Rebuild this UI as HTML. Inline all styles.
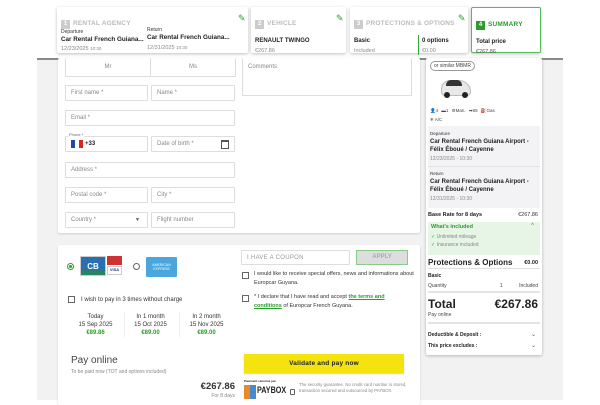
<!DOCTYPE html>
<html><head><meta charset="utf-8"><style>
*{box-sizing:border-box;margin:0;padding:0}
body{width:600px;height:400px;overflow:hidden;background:#fff;font-family:"Liberation Sans",sans-serif;position:relative;color:#222}
.a{position:absolute}
.gray{left:37px;top:58px;width:526px;height:342px;background:#f2f2f2;border-top:2px solid #8a8a8a}
.card{position:absolute;background:#fff;box-shadow:0 1px 3px rgba(0,0,0,.25);border-radius:2px}
.num{display:inline-block;width:9px;height:9px;background:#ccc;color:#fff;font-size:6px;text-align:center;line-height:9px;font-weight:bold;margin-right:3px}
.st{font-size:6.5px;color:#bbb;font-weight:bold;letter-spacing:.2px}
.pen{position:absolute;top:6px;color:#2a9d2a;font-size:9px}
.s{font-size:5px;color:#333}
.b{font-size:6.5px;font-weight:bold;color:#222}
.g{font-size:5.5px;color:#888}
.in{position:absolute;border:1px solid #ddd;background:#fff;font-size:6px;color:#888;padding-left:5px;display:flex;align-items:center;border-radius:1px}
.cb{position:absolute;width:7px;height:7px;border:1px solid #666;background:#fff}
.t6{font-size:6px;color:#333}
</style></head><body>
<div class="a gray"></div>
<!-- top cards -->
<div class="card" style="left:57px;top:7px;width:191px;height:46px">
 <div class="a" style="left:4px;top:5px"><span class="num">1</span><span class="st">RENTAL AGENCY</span></div>
 <div class="pen" style="left:181px">✎</div>
 <div class="a s" style="left:4px;top:22px">Departure</div>
 <div class="a b" style="left:4px;top:29px;font-size:6.3px">Car Rental French Guiana...</div>
 <div class="a g" style="left:4px;top:39px">12/23/2025 <span style="font-size:4.5px">10:30</span></div>
 <div class="a s" style="left:90px;top:20px">Return</div>
 <div class="a b" style="left:90px;top:27px;font-size:6.3px">Car Rental French Guiana...</div>
 <div class="a g" style="left:90px;top:38px">12/31/2025 <span style="font-size:4.5px">10:30</span></div>
</div>
<div class="card" style="left:251px;top:7px;width:95px;height:46px">
 <div class="a" style="left:4px;top:5px"><span class="num">2</span><span class="st">VEHICLE</span></div>
 <div class="pen" style="left:85px">✎</div>
 <div class="a b" style="left:4px;top:31px;font-size:6px">RENAULT TWINGO</div>
 <div class="a g" style="left:4px;top:41px">€267.86</div>
</div>
<div class="card" style="left:350px;top:7px;width:118px;height:46px">
 <div class="a" style="left:4px;top:5px"><span class="num">3</span><span class="st">PROTECTIONS &amp; OPTIONS</span></div>
 <div class="pen" style="left:108px">✎</div>
 <div class="a b" style="left:4px;top:31px;font-size:6px">Basic</div>
 <div class="a g" style="left:4px;top:41px">Included</div>
 <div class="a" style="left:68px;top:28px;width:1px;height:20px;background:#3a3"></div>
 <div class="a b" style="left:72px;top:31px;font-size:6px">0 options</div>
 <div class="a g" style="left:72px;top:41px">€0.00</div>
</div>
<div class="card" style="left:471px;top:7px;width:70px;height:46px;border:1px solid #5cb85c">
 <div class="a" style="left:4px;top:5px"><span class="num" style="background:#2a9d2a">4</span><span class="st" style="color:#2a9d2a">SUMMARY</span></div>
 <div class="a b" style="left:4px;top:31px;font-size:6px">Total price</div>
 <div class="a g" style="left:4px;top:41px;color:#555">€267.86</div>
</div>
<!-- form panel -->
<div class="card" style="left:58px;top:58px;width:362px;height:175px;box-shadow:0 1px 2px rgba(0,0,0,.15)">
 <div class="in" style="left:7px;top:0;width:171px;height:19px;padding:0;border-top:none">
  <div style="width:85px;text-align:center;border-right:1px solid #ddd;height:100%;line-height:19px">Mr</div><div style="flex:1;text-align:center">Ms</div></div>
 <div class="in" style="left:7px;top:27px;width:83px;height:16px">First name *</div>
 <div class="in" style="left:93px;top:27px;width:84px;height:16px">Name *</div>
 <div class="in" style="left:7px;top:52px;width:170px;height:16px">Email *</div>
 <div class="in" style="left:7px;top:78px;width:83px;height:16px;color:#222;font-weight:bold"><span style="display:inline-block;width:4px;height:8px;background:#1e4ba0"></span><span style="display:inline-block;width:4px;height:8px;background:#fff"></span><span style="display:inline-block;width:4px;height:8px;background:#d22;margin-right:2px"></span>+33</div>
 <div class="a" style="left:10px;top:74px;font-size:4px;color:#666;background:#fff;padding:0 1px">Phone *</div>
 <div class="in" style="left:93px;top:78px;width:84px;height:16px">Date of birth *<span style="position:absolute;right:5px;top:3px;width:8px;height:9px;border:1.3px solid #555;border-top-width:2.5px"></span></div>
 <div class="in" style="left:7px;top:104px;width:170px;height:16px">Address *</div>
 <div class="in" style="left:7px;top:129px;width:83px;height:16px">Postal code *</div>
 <div class="in" style="left:93px;top:129px;width:84px;height:16px">City *</div>
 <div class="in" style="left:7px;top:154px;width:83px;height:16px">Country *<span style="position:absolute;right:7px;font-size:5px;color:#555">▼</span></div>
 <div class="in" style="left:93px;top:154px;width:84px;height:16px">Flight number</div>
 <div class="in" style="left:184px;top:0;width:170px;height:38px;align-items:flex-start;padding-top:6px;border-top:none">Comments</div>
</div>
<!-- payment panel -->
<div class="card" style="left:58px;top:245px;width:362px;height:160px;box-shadow:0 1px 2px rgba(0,0,0,.15)">
 <div class="a" style="left:9px;top:18px;width:7px;height:7px;border-radius:50%;border:1px solid #2a9d2a"><div style="margin:1px;width:3px;height:3px;border-radius:50%;background:#2a9d2a"></div></div>
 <div class="a" style="left:22px;top:11px;width:26px;height:20px;background:linear-gradient(#2a6fb0 60%,#2a8a4a);border:1px solid #ccc;color:#fff;font-weight:bold;font-size:8px;text-align:center;line-height:20px">CB</div>
 <div class="a" style="left:49px;top:11px;width:15px;height:9px;background:#c33"></div>
 <div class="a" style="left:49px;top:21px;width:15px;height:9px;background:#fff;border:1px solid #ccc;font-size:4px;color:#1a3d8c;font-weight:bold;text-align:center">VISA</div>
 <div class="a" style="left:75px;top:18px;width:7px;height:7px;border-radius:50%;border:1px solid #666"></div>
 <div class="a" style="left:88px;top:12px;width:31px;height:20px;background:#4aa6dc;border-radius:1px;color:#fff;font-size:3.5px;text-align:center;padding-top:6px">AMERICAN EXPRESS</div>
 <div class="cb" style="left:10px;top:51px"></div>
 <div class="a t6" style="left:23px;top:52px">I wish to pay in 3 times without charge</div>
 <div class="a t6" style="left:15px;top:68px;width:45px;text-align:center;line-height:8px">Today<br>15 Sep 2025<br><b style="color:#2a9d2a">€89.86</b></div>
 <div class="a" style="left:66px;top:67px;width:1px;height:25px;background:#eee"></div>
 <div class="a t6" style="left:70px;top:68px;width:45px;text-align:center;line-height:8px">In 1 month<br>15 Oct 2025<br><b style="color:#2a9d2a">€89.00</b></div>
 <div class="a" style="left:121px;top:67px;width:1px;height:25px;background:#eee"></div>
 <div class="a t6" style="left:126px;top:68px;width:45px;text-align:center;line-height:8px">In 2 month<br>15 Nov 2025<br><b style="color:#2a9d2a">€89.00</b></div>
 <div class="a" style="left:13px;top:110px;font-size:10px;color:#444">Pay online</div>
 <div class="a" style="left:13px;top:124px;font-size:5px;color:#888">To be paid now (TOT and options included)</div>
 <div class="a" style="left:130px;top:136px;font-size:9.5px;font-weight:bold;color:#333;width:47px;text-align:right">€267.86</div>
 <div class="a" style="left:130px;top:148px;font-size:5px;color:#888;width:47px;text-align:right">For 8 days</div>
 <div class="in" style="left:183px;top:5px;width:109px;height:15px;color:#999;letter-spacing:.3px">I HAVE A COUPON</div>
 <div class="a" style="left:298px;top:5px;width:52px;height:15px;background:#ddd;border:1px solid #8c8;font-size:6px;font-weight:bold;color:#aaa;text-align:center;line-height:13px">APPLY</div>
 <div class="cb" style="left:184px;top:27px"></div>
 <div class="a" style="left:196px;top:25px;width:160px;line-height:8.5px;font-size:5.5px;color:#333">I would like to receive special offers, news and informations about Europcar Guyana.</div>
 <div class="cb" style="left:184px;top:50px"></div>
 <div class="a" style="left:196px;top:48px;width:150px;line-height:8.5px;font-size:5.5px;color:#333">* I declare that I have read and accept <span style="color:#2a9d2a;text-decoration:underline;font-weight:bold">the terms and conditions</span> of Europcar French Guyana.</div>
 <div class="a" style="left:186px;top:109px;width:160px;height:19px;background:#f5e30f;box-shadow:0 1px 1px rgba(0,0,0,.2);font-size:6.5px;font-weight:bold;text-align:center;line-height:19px;letter-spacing:.2px">Validate and pay now</div>
 <div class="a" style="left:186px;top:134px;font-size:3px;font-weight:bold">Paiement sécurisé par</div>
 <div class="a" style="left:186px;top:140px;width:12px;height:14px;background:linear-gradient(90deg,#e8892a 50%,#4a8ad0 50%)"></div>
 <div class="a" style="left:199px;top:140px;font-size:9px;font-weight:bold;color:#222;transform:scaleX(.8);transform-origin:left">PAYBOX</div>
 <div class="a" style="left:232px;top:144px;width:5px;height:6px;border:1px solid #666;border-radius:1px"></div>
 <div class="a" style="left:241px;top:137px;width:112px;font-size:4.3px;color:#888;line-height:5.5px">The security guarantee. No credit card number is stored, transaction secured and outsourced by PAYBOX.</div>
</div>
<!-- summary -->
<div class="card" style="left:426px;top:58px;width:116px;height:297px">
 <div class="a" style="left:4px;top:3px;border:1px solid #999;border-radius:6px;font-size:5px;padding:1px 3px;color:#444">or similar MBMR</div>
 <div class="a" style="left:15px;top:22px;width:30px;height:16px;background:#e8e8e8;border-radius:9px 12px 4px 4px;border:1px solid #bbb"></div>
 <div class="a" style="left:20px;top:22px;width:16px;height:6px;background:#333;border-radius:5px 5px 0 0"></div>
 <div class="a" style="left:18px;top:34px;width:6px;height:6px;background:#222;border-radius:50%"></div>
 <div class="a" style="left:36px;top:34px;width:6px;height:6px;background:#222;border-radius:50%"></div>
 <div class="a" style="left:4px;top:50px;font-size:4.5px;color:#444;word-spacing:2px">👤4 ▬1 ⚙Man. ➡65 ⛽Gas</div>
 <div class="a" style="left:4px;top:59px;font-size:4.5px;color:#444">❄ A/C</div>
 <div class="a" style="left:2px;top:68px;width:112px;height:82px;background:#f3f3f5"></div>
 <div class="a" style="left:4px;top:73px;font-size:4.5px;color:#333">Departure</div>
 <div class="a b" style="left:4px;top:80px;font-size:6px;line-height:8px;width:110px">Car Rental French Guiana Airport - Félix Éboué / Cayenne</div>
 <div class="a g" style="left:4px;top:98px;font-size:5px">12/23/2025 - 10:30</div>
 <div class="a" style="left:2px;top:108px;width:112px;height:1px;background:#e0e0e0"></div>
 <div class="a" style="left:4px;top:113px;font-size:4.5px;color:#333">Return</div>
 <div class="a b" style="left:4px;top:120px;font-size:6px;line-height:8px;width:110px">Car Rental French Guiana Airport - Félix Éboué / Cayenne</div>
 <div class="a g" style="left:4px;top:138px;font-size:5px">12/31/2025 - 10:30</div>
 <div class="a b" style="left:2px;top:154px;font-size:5.5px">Base Rate for 8 days</div>
 <div class="a" style="right:4px;top:154px;font-size:5.5px;color:#333">€267.86</div>
 <div class="a" style="left:2px;top:164px;width:112px;height:33px;background:#e6f5e6"></div>
 <div class="a" style="left:5px;top:166px;font-size:5.5px;font-weight:bold;color:#2a9d2a">What's included</div>
 <div class="a" style="right:8px;top:165px;font-size:6px;color:#2a9d2a">^</div>
 <div class="a" style="left:5px;top:176px;font-size:5px;color:#888"><span style="color:#2a9d2a">✓</span> Unlimited mileage</div>
 <div class="a" style="left:5px;top:184px;font-size:5px;color:#888"><span style="color:#2a9d2a">✓</span> Insurance included</div>
 <div class="a" style="left:2px;top:200px;font-size:8px;font-weight:bold">Protections &amp; Options</div>
 <div class="a" style="right:4px;top:202px;font-size:5.5px;font-weight:bold">€0.00</div>
 <div class="a" style="left:2px;top:210px;width:112px;height:1px;background:#ddd"></div>
 <div class="a b" style="left:2px;top:215px;font-size:5px">Basic</div>
 <div class="a" style="left:2px;top:225px;font-size:5px;color:#444">Quantity</div>
 <div class="a" style="left:74px;top:225px;font-size:5px;color:#444">1</div>
 <div class="a" style="right:4px;top:225px;font-size:5px;color:#444">Included</div>
 <div class="a" style="left:2px;top:233px;width:112px;height:2px;background:#e4e4e4"></div>
 <div class="a" style="left:2px;top:239px;font-size:12px;font-weight:bold">Total</div>
 <div class="a" style="right:4px;top:239px;font-size:12px;font-weight:bold">€267.86</div>
 <div class="a" style="left:2px;top:254px;font-size:5px;color:#444">Pay online</div>
 <div class="a" style="left:2px;top:264px;width:112px;height:2px;background:#e4e4e4"></div>
 <div class="a b" style="left:2px;top:274px;font-size:5px">Deductible &amp; Deposit :</div>
 <div class="a" style="right:6px;top:273px;font-size:6px;color:#555">⌄</div>
 <div class="a b" style="left:2px;top:285px;font-size:5px">This price excludes :</div>
 <div class="a" style="right:6px;top:284px;font-size:6px;color:#555">⌄</div>
</div>
</body></html>
